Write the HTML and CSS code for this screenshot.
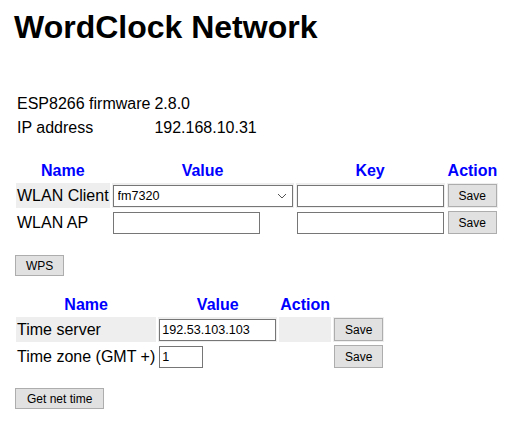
FILE: index.html
```html
<!DOCTYPE html>
<html>
<head>
<meta charset="utf-8">
<title>WordClock Network</title>
<link rel="stylesheet" href="styles.css">
</head>
<body>
<div class="page">
  <h1 class="title">WordClock Network</h1>

  <table class="grid info">
    <tr><td>ESP8266 firmware</td><td>2.8.0</td></tr>
    <tr><td>IP address</td><td>192.168.10.31</td></tr>
  </table>

  <table class="grid wlan">
    <tr><th>Name</th><th>Value</th><th>Key</th><th>Action</th></tr>
    <tr class="odd">
      <td>WLAN Client</td>
      <td><span class="select-wrap"><select class="sel"><option>fm7320</option></select><svg class="chev" width="10" height="6" viewBox="0 0 10 6"><path d="M1 1 L5 5 L9 1" fill="none" stroke="#555" stroke-width="1"/></svg></span></td>
      <td><input class="field w147" type="password"></td>
      <td><button class="btn save">Save</button></td>
    </tr>
    <tr>
      <td>WLAN AP</td>
      <td><input class="field w147" type="text"></td>
      <td><input class="field w147" type="password"></td>
      <td><button class="btn save">Save</button></td>
    </tr>
  </table>

  <div class="btn-row first"><button class="btn">WPS</button></div>

  <table class="grid time">
    <tr><th>Name</th><th>Value</th><th>Action</th></tr>
    <tr class="odd">
      <td>Time server</td>
      <td><input class="field w117" type="text" value="192.53.103.103"></td>
      <td></td>
      <td><button class="btn save">Save</button></td>
    </tr>
    <tr>
      <td>Time zone (GMT +)</td>
      <td><input class="field w44" type="text" value="1"></td>
      <td></td>
      <td><button class="btn save">Save</button></td>
    </tr>
  </table>

  <div class="btn-row second"><button class="btn wide">Get net time</button></div>
</div>
</body>
</html>
```

FILE: styles.css
```css
html, body {
  margin: 0;
  padding: 0;
  background: #ffffff;
}

body {
  font-family: "Liberation Sans", Arial, sans-serif;
  font-size: 16px;
  color: #000000;
}

.page {
  padding: 0 14px;
}

.title {
  font-size: 32px;
  font-weight: bold;
  margin: 9px 0 0 0;
}

.grid {
  border-collapse: separate;
  border-spacing: 2px;
}

.grid td,
.grid th {
  padding: 1px;
  vertical-align: middle;
}

.grid th {
  color: #0000ff;
  font-weight: bold;
  text-align: center;
}

.grid td {
  text-align: left;
}

.odd td {
  background: #eeeeee;
}

.info {
  margin-top: 45px;
}

.info td {
  line-height: 20px;
}

.wlan {
  margin-top: 18px;
}

.time {
  margin-top: 17px;
}

.select-wrap {
  position: relative;
  display: inline-block;
  vertical-align: middle;
}

.sel {
  -webkit-appearance: none;
  appearance: none;
  width: 180px;
  height: 22px;
  box-sizing: border-box;
  border: 1px solid #767676;
  border-radius: 0;
  background: #ffffff;
  font-family: "Liberation Sans", Arial, sans-serif;
  font-size: 12.6px;
  color: #000000;
  padding: 0 0 0 4px;
  margin: 0;
  display: block;
}

.chev {
  position: absolute;
  right: 6px;
  top: 8px;
}

.field {
  height: 22px;
  box-sizing: border-box;
  border: 1px solid #767676;
  border-radius: 0;
  background: #ffffff;
  font-family: "Liberation Sans", Arial, sans-serif;
  font-size: 12.6px;
  color: #000000;
  padding: 1px 2px;
  margin: 0;
  vertical-align: middle;
}

.w147 { width: 147px; }
.w117 { width: 117px; }
.w44 { width: 44px; }

.btn {
  font-family: "Liberation Sans", Arial, sans-serif;
  font-size: 12px;
  color: #000000;
  background: #e1e1e1;
  border: 1px solid #adadad;
  border-radius: 0;
  box-sizing: border-box;
  height: 21px;
  padding: 0 10px;
  margin: 0;
  line-height: normal;
}

.btn.wide {
  padding: 0 11px;
}

.btn.save {
  height: 23px;
  padding: 0 10px;
  vertical-align: middle;
}

.btn-row {
  display: block;
}

.btn-row.first {
  margin-top: 18px;
}

.btn-row.second {
  margin-top: 17px;
}

.btn-row .btn {
  margin-left: 1px;
}
```
